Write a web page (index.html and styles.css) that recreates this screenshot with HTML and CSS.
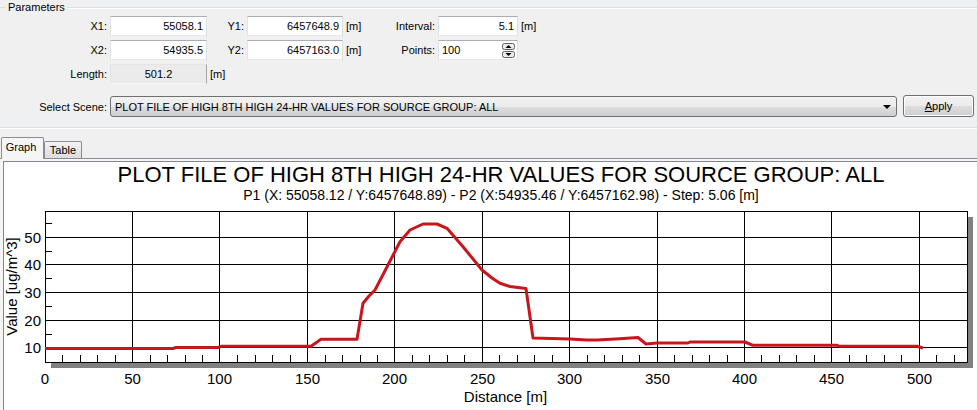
FILE: index.html
```html
<!DOCTYPE html>
<html>
<head>
<meta charset="utf-8">
<title>Profile</title>
<link rel="stylesheet" href="styles.css">
</head>
<body>
<div class="group">
  <div class="group-head"><span>Parameters</span></div>
  <div class="grid">
    <div class="lbl">X1:</div><div class="tb r">55058.1</div>
    <div class="lbl">Y1:</div><div class="tb r">6457648.9</div>
    <div class="unit">[m]</div>
    <div class="lbl">Interval:</div><div class="tb r">5.1</div>
    <div class="unit">[m]</div>

    <div class="lbl">X2:</div><div class="tb r">54935.5</div>
    <div class="lbl">Y2:</div><div class="tb r">6457163.0</div>
    <div class="unit">[m]</div>
    <div class="lbl">Points:</div>
    <div class="tb spin-box"><span>100</span>
      <svg class="spin" width="13" height="15" viewBox="0 0 13 15">
        <rect x="0.5" y="0.5" width="12" height="6" rx="2" fill="#ececec" stroke="#5f5f5f"/>
        <path d="M3.5 5 L6.5 2 L9.5 5Z" fill="#000"/>
        <rect x="0.5" y="8.5" width="12" height="6" rx="2" fill="#ececec" stroke="#5f5f5f"/>
        <path d="M3.5 10 L6.5 13 L9.5 10Z" fill="#000"/>
      </svg>
    </div>
    <div></div>

    <div class="lbl">Length:</div><div class="ro">501.2</div>
    <div class="unit">[m]</div>
  </div>
  <div class="scene">
    <div class="lbl scene-lbl">Select Scene:</div>
    <div class="combo"><span>PLOT FILE OF HIGH 8TH HIGH 24-HR VALUES FOR SOURCE GROUP: ALL</span><span class="arrow"></span></div>
    <div class="btn"><u>A</u>pply</div>
  </div>
</div>

<div class="tabs">
  <div class="tab active">Graph</div>
  <div class="tab">Table</div>
</div>
<div class="panel">
  <div class="chart">
    <div class="title">PLOT FILE OF HIGH 8TH HIGH 24-HR VALUES FOR SOURCE GROUP: ALL</div>
    <div class="subtitle">P1 (X: 55058.12 / Y:6457648.89) - P2 (X:54935.46 / Y:6457162.98) - Step: 5.06 [m]</div>
    <svg class="plot" width="973" height="210" viewBox="4 200 973 210">
      <rect x="51" y="217" width="922" height="151" fill="#808080"/>
      <rect x="45.5" y="211.5" width="922" height="151" fill="#fff" stroke="#000"/>
      <g stroke="#000" stroke-width="1">
        <path d="M132.5 211V362M219.5 211V362M307.5 211V362M394.5 211V362M482.5 211V362M569.5 211V362M657.5 211V362M744.5 211V362M831.5 211V362M919.5 211V362"/>
        <path d="M45 237.5H967M45 264.5H967M45 292.5H967M45 320.5H967M45 347.5H967"/>
        <path d="M45 223.5H52M45 251.5H52M45 278.5H52M45 306.5H52M45 334.5H52"/>
        <path d="M62.5 355V362M80.5 355V362M97.5 355V362M115.5 355V362M150.5 355V362M167.5 355V362M185.5 355V362M202.5 355V362M237.5 355V362M255.5 355V362M272.5 355V362M290.5 355V362M325.5 355V362M342.5 355V362M360.5 355V362M377.5 355V362M412.5 355V362M429.5 355V362M447.5 355V362M464.5 355V362M499.5 355V362M517.5 355V362M534.5 355V362M552.5 355V362M587.5 355V362M604.5 355V362M622.5 355V362M639.5 355V362M674.5 355V362M692.5 355V362M709.5 355V362M727.5 355V362M761.5 355V362M779.5 355V362M796.5 355V362M814.5 355V362M849.5 355V362M866.5 355V362M884.5 355V362M901.5 355V362M936.5 355V362M954.5 355V362"/>
      </g>
      <polyline fill="none" stroke="#c8161d" stroke-width="3" stroke-linejoin="round" points="45,348.5 173,348.5 176,347.5 218,347.5 221,346.3 311,346.3 321,339.3 357,339.3 363,303.3 369,296 375,290 388,265 400,241.7 410,230 423,224 437,224 447,228.3 463,246.7 482,270 492,278 500,283.3 510,286.5 526,288.5 533,338 570,339 587,340 597,340 620,338.7 638,337.5 646,344 657,343 688,343 690,342 745,342 753,345.3 837,345.3 840,346.3 917,346.3 923,348"/>
      <g class="ylab" text-anchor="end">
        <text x="41" y="242.5">50</text>
        <text x="41" y="269.5">40</text>
        <text x="41" y="297.5">30</text>
        <text x="41" y="325.5">20</text>
        <text x="41" y="352.5">10</text>
      </g>
      <g class="xlab" text-anchor="middle">
        <text x="45" y="383.5">0</text>
        <text x="132.5" y="383.5">50</text>
        <text x="219.5" y="383.5">100</text>
        <text x="307.5" y="383.5">150</text>
        <text x="394.5" y="383.5">200</text>
        <text x="482.5" y="383.5">250</text>
        <text x="569.5" y="383.5">300</text>
        <text x="657.5" y="383.5">350</text>
        <text x="744.5" y="383.5">400</text>
        <text x="831.5" y="383.5">450</text>
        <text x="919.5" y="383.5">500</text>
      </g>
      <text class="axis" x="505.5" y="402" text-anchor="middle">Distance [m]</text>
      <text class="axis" x="0" y="0" text-anchor="middle" transform="translate(17 286.5) rotate(-90)">Value [ug/m^3]</text>
    </svg>
  </div>
</div>
</body>
</html>
```

FILE: styles.css
```css
html, body {
  margin: 0;
  padding: 0;
}
body {
  width: 977px;
  height: 410px;
  overflow: hidden;
  background: #f0f0f0;
  font: 11px "Liberation Sans", Arial, sans-serif;
  color: #000;
  display: flex;
  flex-direction: column;
}

/* group box */
.group {
  padding-bottom: 10px;
  border-bottom: 1px solid #d5dfe5;
  box-shadow: 0 1px 0 #ffffff;
}
.group-head {
  display: flex;
  align-items: center;
  height: 14px;
  line-height: 14px;
}
.group-head::before {
  content: "";
  width: 6px;
  border-top: 1px solid #d5dfe5;
}
.group-head span {
  padding: 0 2px;
}
.group-head::after {
  content: "";
  flex: 1;
  border-top: 1px solid #d5dfe5;
  box-shadow: 0 1px 0 #ffffff;
}

.grid {
  margin-top: 2px;
  display: grid;
  grid-template-columns: 110px 97px 40px 96px 40px 55px 80px 40px;
  grid-auto-rows: 20px;
  row-gap: 4px;
  align-items: center;
}
.lbl {
  text-align: right;
  padding-right: 3px;
  white-space: nowrap;
}
.unit {
  padding-left: 3px;
}
.tb {
  height: 20px;
  box-sizing: border-box;
  background: #fff;
  border: 1px solid;
  border-color: #abadb3 #dbdfe6 #e3e9ef #e2e3ea;
  line-height: 18px;
  padding: 0 3px;
  white-space: nowrap;
}
.tb.r {
  text-align: right;
}
.spin-box {
  display: flex;
  align-items: center;
  justify-content: space-between;
  padding-right: 2px;
}
.spin {
  display: block;
  margin-top: 1px;
}
.ro {
  height: 20px;
  box-sizing: border-box;
  background: #ebebeb;
  border: 1px solid;
  border-color: #e4e4e4 #a9a9a9 #f6f6f6 #e4e4e4;
  line-height: 18px;
  text-align: center;
}

.scene {
  margin-top: 11px;
  display: flex;
  align-items: flex-end;
  height: 22px;
}
.scene-lbl {
  width: 110px;
  box-sizing: border-box;
  align-self: center;
  margin-top: 1px;
}
.combo {
  width: 787px;
  height: 21px;
  box-sizing: border-box;
  border: 1px solid #707070;
  border-radius: 3px;
  background: linear-gradient(#f2f2f2 0%, #ebebeb 50%, #dddddd 51%, #cfcfcf 100%);
  display: flex;
  align-items: center;
  justify-content: space-between;
  padding: 0 5px 0 4px;
}
.arrow {
  width: 0;
  height: 0;
  border-left: 4px solid transparent;
  border-right: 4px solid transparent;
  border-top: 4px solid #000;
  margin-top: 1px;
}
.btn {
  margin-left: 6px;
  width: 71px;
  height: 22px;
  box-sizing: border-box;
  border: 1px solid #707070;
  border-radius: 3px;
  background: linear-gradient(#f2f2f2 0%, #ebebeb 50%, #dddddd 51%, #cfcfcf 100%);
  box-shadow: inset 0 0 0 1px #fcfcfc;
  text-align: center;
  line-height: 20px;
}
.btn u {
  text-decoration: underline;
}

/* tabs */
.tabs {
  margin-top: 9px;
  height: 21px;
  display: flex;
  align-items: flex-end;
  padding-left: 1px;
}
.tab {
  box-sizing: border-box;
  height: 17px;
  width: 38px;
  border: 1px solid #898c95;
  border-bottom: none;
  border-radius: 2px 2px 0 0;
  background: linear-gradient(#f3f3f3, #dcdcdc);
  text-align: center;
  line-height: 17px;
}
.tab.active {
  position: relative;
  width: 43px;
  height: 22px;
  margin-bottom: -1px;
  background: #f5f5f5;
  line-height: 19px;
  padding-right: 3px;
}
.panel {
  flex: 1;
  border-top: 1px solid #898c95;
  background: #f5f5f5;
  padding: 2px 0 0 3px;
  display: flex;
  min-height: 0;
}
.chart {
  flex: 1;
  background: #fff;
  border-left: 1px solid #828790;
  border-top: 1px solid #828790;
  overflow: hidden;
  font-family: "Liberation Sans", Arial, sans-serif;
}
.title {
  height: 24px;
  line-height: 26px;
  font-size: 22px;
  text-align: center;
  padding-left: 21px;
  white-space: nowrap;
}
.subtitle {
  height: 14px;
  line-height: 18px;
  font-size: 14px;
  text-align: center;
  padding-left: 21px;
  white-space: nowrap;
}
.plot {
  display: block;
}
.plot text {
  font-family: "Liberation Sans", Arial, sans-serif;
  font-size: 15px;
  fill: #000;
}
```
